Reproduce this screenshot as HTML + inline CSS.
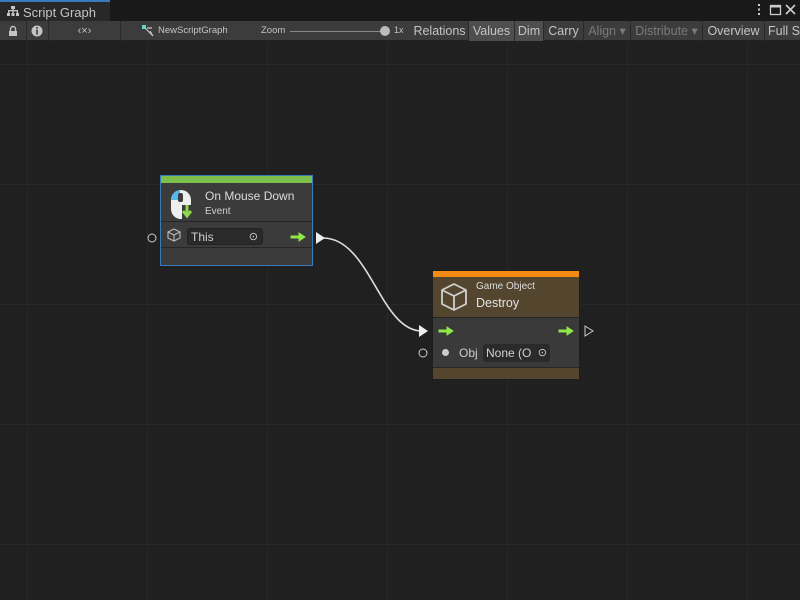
<!DOCTYPE html>
<html><head><style>
*{margin:0;padding:0;box-sizing:border-box}
body{width:800px;height:600px;overflow:hidden;background:#202020;font-family:"Liberation Sans",sans-serif;position:relative;color:#d2d2d2}
.grid{position:absolute;left:0;top:41px;width:800px;height:559px;
background-image:linear-gradient(to right,#282828 1px,transparent 1px),linear-gradient(to bottom,#282828 1px,transparent 1px);
background-size:120px 120px;background-position:27px 23px}
.tabbar{position:absolute;left:0;top:0;width:800px;height:21px;background:#191919}
.tab{position:absolute;left:0;top:0;width:110px;height:21px;background:#282828;border-top:2px solid #3a79bb;font-size:13px;color:#c4c4c4;padding:3px 0 0 23px}
.tb{position:absolute;left:0;top:21px;width:800px;height:20px;background:#3c3c3c;border-bottom:1px solid #232323}
.tb div{position:absolute;top:0;height:20px;font-size:12.5px;line-height:20px;color:#c4c4c4;border-right:1px solid #2a2a2a;text-align:center}
.node{position:absolute}
.a{position:absolute}
</style></head><body>
<div class="tabbar"></div>
<div class="tab">Script Graph</div>
<svg class="a" style="left:7px;top:6px" width="12" height="11"><rect x="4" y="0" width="4" height="3" fill="#c4c4c4"/><rect x="1" y="4" width="10" height="1.3" fill="#c4c4c4"/><rect x="1" y="4" width="1.3" height="3" fill="#c4c4c4"/><rect x="5.4" y="3" width="1.3" height="4" fill="#c4c4c4"/><rect x="9.7" y="4" width="1.3" height="3" fill="#c4c4c4"/><rect x="0" y="7" width="3" height="3" fill="#c4c4c4"/><rect x="4.5" y="7" width="3" height="3" fill="#c4c4c4"/><rect x="9" y="7" width="3" height="3" fill="#c4c4c4"/></svg>
<svg class="a" style="left:755px;top:3px" width="45" height="15"><rect x="3" y="1" width="2" height="2" fill="#ccc"/><rect x="3" y="5.5" width="2" height="2" fill="#ccc"/><rect x="3" y="10" width="2" height="2" fill="#ccc"/><rect x="15.5" y="2.5" width="10" height="9" stroke="#ccc" stroke-width="1.3" fill="none"/><rect x="15" y="2" width="11" height="2.5" fill="#ccc"/><path d="M31 2 L40 11 M40 2 L31 11" stroke="#ccc" stroke-width="1.6"/></svg>
<div class="tb">
<div style="left:0;width:27px"></div>
<div style="left:27px;width:22px"></div>
<div style="left:49px;width:72px;font-size:11px">‹×›</div>
<div style="left:121px;width:290px;border:none"></div>
<div style="left:411px;width:58px">Relations</div>
<div style="left:469px;width:46px;background:#4e4e4e">Values</div>
<div style="left:515px;width:29px;background:#4e4e4e">Dim</div>
<div style="left:544px;width:40px">Carry</div>
<div style="left:584px;width:47px;color:#7a7a7a">Align ▾</div>
<div style="left:631px;width:72px;color:#7a7a7a">Distribute ▾</div>
<div style="left:703px;width:62px">Overview</div>
<div style="left:765px;width:40px;text-align:left;padding-left:3px">Full S</div>
</div>
<svg class="a" style="left:7px;top:25px" width="12" height="12"><path d="M3.5 6 V4 A2.5 2.5 0 0 1 8.5 4 V6" stroke="#c4c4c4" stroke-width="1.4" fill="none"/><rect x="2" y="6" width="8" height="5" fill="#c4c4c4"/></svg>
<svg class="a" style="left:31px;top:25px" width="12" height="12"><circle cx="6" cy="6" r="5.5" fill="#c4c4c4"/><rect x="5.2" y="2" width="1.6" height="1.6" fill="#3c3c3c"/><rect x="5.2" y="4.5" width="1.6" height="5" fill="#3c3c3c"/></svg>
<svg class="a" style="left:142px;top:25px" width="12" height="12"><rect x="0" y="0" width="4" height="4" fill="#5ed6c8"/><path d="M3 3 L11 11 M5 3 H10 M8 6 L11 11" stroke="#c4c4c4" stroke-width="1.2" fill="none"/></svg>
<div class="a" style="left:158px;top:25px;font-size:9.5px;color:#c4c4c4">NewScriptGraph</div>
<div class="a" style="left:261px;top:25px;font-size:9.5px;color:#c4c4c4">Zoom</div>
<div class="a" style="left:290px;top:31px;width:95px;height:1px;background:#888"></div>
<div class="a" style="left:380px;top:26px;width:10px;height:10px;border-radius:50%;background:#bbb"></div>
<div class="a" style="left:394px;top:25px;font-size:9px;color:#c4c4c4">1x</div>
<div class="grid"></div>

<svg class="a" style="left:0;top:0" width="800" height="600">
<path d="M323 238 C370 238 380 331 422 331" stroke="#ddd" stroke-width="1.6" fill="none"/>
<path d="M316 232 L325 238 L316 244Z" fill="#eee"/>
<path d="M419 325 L428 331 L419 337Z" fill="#eee"/>
<circle cx="152" cy="238" r="4" stroke="#ccc" fill="none"/>
<circle cx="423" cy="353" r="4" stroke="#ccc" fill="none"/>
<path d="M585 326 L593 331 L585 336Z" stroke="#ccc" fill="none"/>
</svg>

<div class="node" style="left:160px;top:175px;width:153px;height:91px;border:1px solid #3a79bb;background:#3b3b3b">
<div style="height:7px;background:#7cbf4a"></div>
<div style="height:39px;border-bottom:1px solid #262626;position:relative">
<div class="a" style="left:44px;top:6px;font-size:12px;color:#dcdcdc">On Mouse Down</div>
<div class="a" style="left:44px;top:23px;font-size:10px;color:#cfcfcf">Event</div>
<svg class="a" style="left:8px;top:4px" width="28" height="32"><path d="M2 13 A10 10 0 0 1 22 13 V22 A10 10 0 0 1 2 22Z" fill="#eee"/><path d="M2 13 A10 10 0 0 1 11 3 V13Z" fill="#5ab5e8"/><rect x="9" y="6" width="5" height="9" rx="2" fill="#3b3b3b"/><path d="M13 18 H27 V33 H13Z" fill="#3b3b3b"/><path d="M18 18 V27 M14 24 L18 29 L22 24" stroke="#8fd94a" stroke-width="3" fill="none"/></svg>
</div>
<div style="height:26px;border-bottom:1px solid #262626;position:relative">
<svg class="a" style="left:6px;top:6px" width="14" height="14"><path d="M7 1 L13 4 V10 L7 13 L1 10 V4Z M1 4 L7 7 L13 4 M7 7 V13" stroke="#bbb" stroke-width="1.1" fill="none"/></svg>
<div class="a" style="left:26px;top:6px;width:76px;height:17px;background:#2a2a2a;border:1px solid #222;border-radius:3px;font-size:12px;color:#d0d0d0;padding:1px 3px">This<span style="position:absolute;right:4px;top:1px;font-size:11px">⊙</span></div>
</div>
</div>

<div class="node" style="left:432px;top:270px;width:148px;height:110px;border:1px solid #1e1e1e;background:#3a3a3a">
<div style="height:6px;background:#f58a12"></div>
<div style="height:41px;background:#54452f;border-bottom:1px solid #262626;position:relative">
<div class="a" style="left:43px;top:4px;font-size:10px;color:#dcdcdc">Game Object</div>
<div class="a" style="left:43px;top:19px;font-size:12.5px;color:#e4e4e4">Destroy</div>
<svg class="a" style="left:7px;top:5px" width="28" height="30"><path d="M14 2 L26 8 V22 L14 28 L2 22 V8Z M2 8 L14 14 L26 8 M14 14 V28" stroke="#d0d0d0" stroke-width="1.8" fill="none" stroke-linejoin="round"/></svg>
</div>
<div style="height:49px;position:relative">
<div class="a" style="left:9px;top:31px;width:7px;height:7px;border-radius:50%;background:#ccc"></div>
<div class="a" style="left:26px;top:28px;font-size:12px;color:#ccc">Obj</div>
<div class="a" style="left:50px;top:26px;width:67px;height:18px;background:#2a2a2a;border-radius:3px;font-size:12px;color:#d0d0d0;padding:2px 3px;overflow:hidden;white-space:nowrap">None (O<span style="position:absolute;right:3px;top:2px;font-size:11px;background:#2a2a2a">⊙</span></div>
</div>
<div style="height:12px;background:#54452f;border-top:1px solid #262626"></div>
</div>

<svg class="a" style="left:0;top:0;z-index:5" width="800" height="600">
<path d="M291 236 H299 V233 L305 237 L299 241 V238 H291Z" fill="#8fe84a" stroke="#8fe84a" stroke-width="1"/>
<path d="M439 330 H447 V327 L453 331 L447 335 V332 H439Z" fill="#8fe84a" stroke="#8fe84a" stroke-width="1"/>
<path d="M559 330 H567 V327 L573 331 L567 335 V332 H559Z" fill="#8fe84a" stroke="#8fe84a" stroke-width="1"/>
</svg>
</body></html>
